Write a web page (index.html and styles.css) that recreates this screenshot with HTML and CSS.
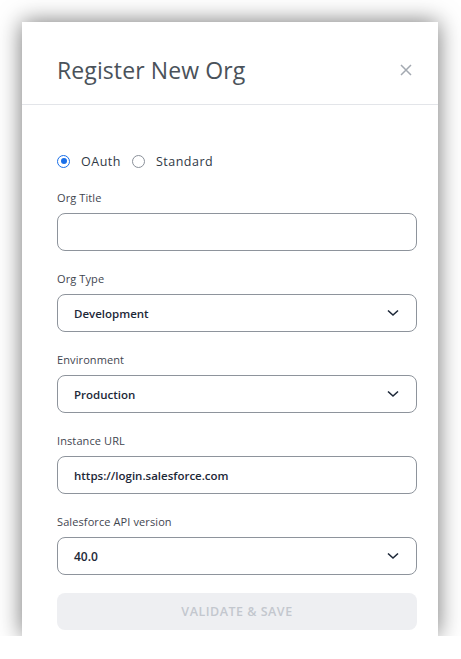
FILE: index.html
```html
<!DOCTYPE html>
<html>
<head>
<meta charset="utf-8">
<link rel="stylesheet" href="styles.css">
</head>
<body>
<div class="modal">
  <div class="modal-header">
    <h1 class="title">Register New Org</h1>
    <button class="close" aria-label="Close">
      <svg width="12" height="12" viewBox="0 0 12 12"><path d="M1 1L11 11M11 1L1 11" stroke="#a3a9b1" stroke-width="1.5" fill="none"/></svg>
    </button>
  </div>
  <div class="modal-body">
    <div class="radios">
      <label class="radio"><span class="dot checked"></span>OAuth</label>
      <label class="radio"><span class="dot"></span>Standard</label>
    </div>
    <div class="field">
      <div class="label">Org Title</div>
      <div class="control"></div>
    </div>
    <div class="field">
      <div class="label">Org Type</div>
      <div class="control select"><span class="value">Development</span><svg class="chev" width="12" height="8" viewBox="0 0 12 8"><path d="M1 1.5L6 6L11 1.5" stroke="#1d2838" stroke-width="1.6" fill="none"/></svg></div>
    </div>
    <div class="field">
      <div class="label">Environment</div>
      <div class="control select"><span class="value">Production</span><svg class="chev" width="12" height="8" viewBox="0 0 12 8"><path d="M1 1.5L6 6L11 1.5" stroke="#1d2838" stroke-width="1.6" fill="none"/></svg></div>
    </div>
    <div class="field">
      <div class="label">Instance URL</div>
      <div class="control"><span class="value">https://login.salesforce.com</span></div>
    </div>
    <div class="field">
      <div class="label">Salesforce API version</div>
      <div class="control select"><span class="value api">40.0</span><svg class="chev" width="12" height="8" viewBox="0 0 12 8"><path d="M1 1.5L6 6L11 1.5" stroke="#1d2838" stroke-width="1.6" fill="none"/></svg></div>
    </div>
    <button class="submit">VALIDATE &amp; SAVE</button>
  </div>
</div>
</body>
</html>
```
FILE: styles.css
```css
html, body {
  margin: 0;
  padding: 0;
  background: #ffffff;
}
body {
  font-family: "Open Sans", "Liberation Sans", sans-serif;
  padding: 22px 0 0 22px;
}
.modal {
  width: 416px;
  height: 614px;
  background: #ffffff;
  box-shadow: 0 0 22px rgba(0, 0, 0, 0.55);
  overflow: hidden;
}
.modal-header {
  height: 83px;
  border-bottom: 1px solid #e3e5e9;
  display: flex;
  align-items: center;
  justify-content: space-between;
  padding: 16px 25px 0 35px;
  box-sizing: border-box;
}
.title {
  margin: 0;
  font-size: 23px;
  font-weight: 400;
  color: #4a525a;
  letter-spacing: 0.1px;
  padding-bottom: 2px;
}
.close {
  border: none;
  background: none;
  padding: 0;
  width: 14px;
  height: 14px;
  display: flex;
  align-items: center;
  justify-content: center;
  margin-bottom: 2px;
}
.modal-body {
  padding: 48px 21px 0 35px;
}
.radios {
  display: flex;
  align-items: center;
  gap: 11px;
  height: 16px;
  margin-bottom: 22px;
}
.radio {
  display: flex;
  align-items: center;
  gap: 11px;
  font-size: 12.5px;
  color: #2f3845;
  letter-spacing: 0.5px;
}
.dot {
  width: 11px;
  height: 11px;
  border: 1px solid #8a9099;
  border-radius: 50%;
  box-sizing: content-box;
  position: relative;
}
.dot.checked {
  border-color: #1a6fe8;
}
.dot.checked::after {
  content: "";
  position: absolute;
  left: 2.5px;
  top: 2.5px;
  width: 6px;
  height: 6px;
  border-radius: 50%;
  background: #1a6fe8;
}
.field {
  margin-bottom: 21px;
}
.label {
  font-size: 11px;
  line-height: 14px;
  color: #3f4650;
  margin-bottom: 8px;
  letter-spacing: 0.1px;
}
.control {
  height: 38px;
  border: 1px solid #8e949c;
  border-radius: 8px;
  box-sizing: border-box;
  display: flex;
  align-items: center;
  justify-content: space-between;
  padding: 0 17px 0 16px;
}
.value {
  font-size: 11.5px;
  font-weight: 600;
  color: #1d2838;
}
.value.api {
  font-size: 12px;
}
.chev {
  display: block;
}
.submit {
  display: block;
  width: 100%;
  height: 37px;
  margin-top: -3px;
  border: none;
  border-radius: 8px;
  background: #eeeff2;
  color: #c3c7ce;
  font-family: "Open Sans", "Liberation Sans", sans-serif;
  font-size: 12.5px;
  font-weight: 600;
  letter-spacing: 0.5px;
}
```
